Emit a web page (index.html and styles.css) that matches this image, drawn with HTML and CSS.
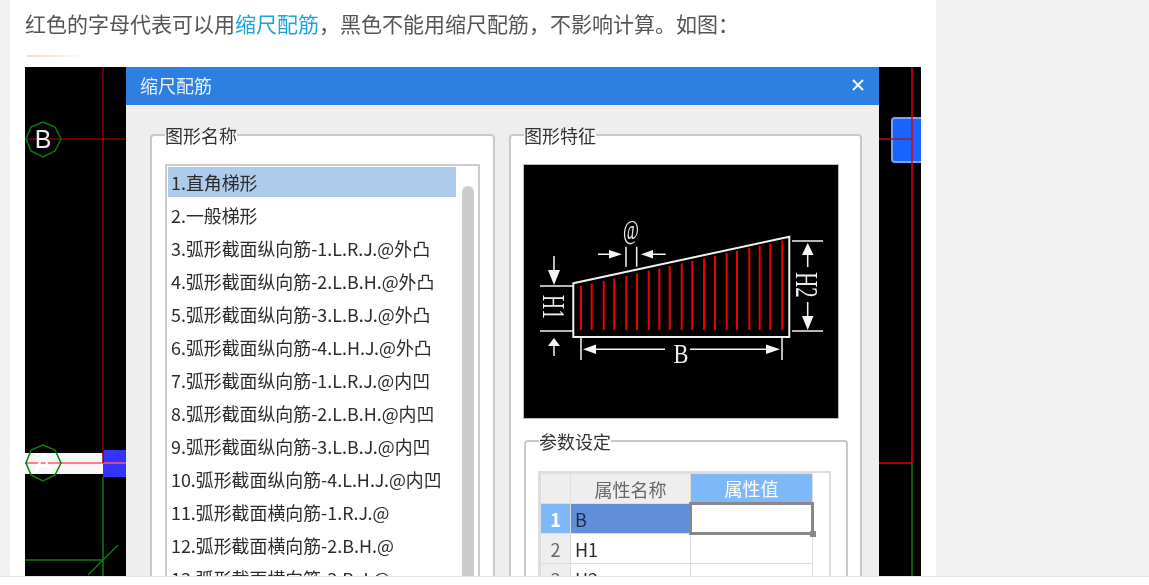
FILE: index.html
```html
<!DOCTYPE html>
<html lang="zh-CN">
<head>
  <meta charset="UTF-8">
  <title>缩尺配筋</title>
  <link rel="stylesheet" href="styles.css">
</head>
<body>

<div class="page">
  <div class="article">
    <p class="intro">红色的字母代表可以用<a href="#" class="link">缩尺配筋</a>，黑色不能用缩尺配筋，不影响计算。如图：</p>
    <div class="img-sliver"></div>

    <div class="shot">
      <!-- CAD drawing behind the dialog -->
      <svg class="cad" viewBox="25 67 896 509" width="896" height="509">
        <rect x="25" y="67" width="896" height="509" fill="#000"/>
        <rect x="25" y="453" width="78" height="21" fill="#f7f7f7"/>
        <rect x="103" y="450" width="23" height="27" fill="#3333ff"/>
        <path d="M103 67V452M25 139H126" stroke="#8a0000" stroke-width="1.5" fill="none"/>
        <path d="M25 463H126" stroke="#ff5a6a" stroke-width="1.5" fill="none"/>
        <path d="M103 452V463" stroke="#8a0000" stroke-width="1.5"/>
        <path d="M103 477V576M25 560H103M118 545L88 575" stroke="#0a7d0a" stroke-width="1.5" fill="none"/>
        <polygon class="axis" points="43,122 55,127 61,139 55,151 43,157 31,151 26,139 31,127"/>
        <polygon class="axis" points="43,445 55,450 61,463 55,475 43,481 31,475 26,463 31,450"/>
        <text class="axis-label" x="43" y="148">B</text>
        <text class="axis-label axis-label-faint" x="43" y="472">A</text>
        <rect x="892" y="118" width="32" height="44" rx="3" fill="#1964ff" stroke="#7aa6f5" stroke-width="2"/>
        <path d="M879 139H912" stroke="#a5122e" stroke-width="1.5"/>
        <path d="M912 67V463M879 463H912" stroke="#e00010" stroke-width="1.5" fill="none"/>
        <path d="M912 463V576" stroke="#0a7d0a" stroke-width="1.5"/>
        <circle cx="294" cy="66" r="4" fill="#f0404a"/>
      </svg>

      <div class="dialog">
        <div class="dialog-title">
          <span>缩尺配筋</span>
          <svg class="close" viewBox="0 0 12 12" width="12" height="12">
            <path d="M1 1L11 11M11 1L1 11" stroke="#fff" stroke-width="2"/>
          </svg>
        </div>

        <div class="dialog-body">
          <fieldset class="group group-names">
            <legend>图形名称</legend>
            <div class="listbox">
              <ul class="shape-list">
                <li class="active">1.直角梯形</li>
                <li>2.一般梯形</li>
                <li>3.弧形截面纵向筋-1.L.R.J.@外凸</li>
                <li>4.弧形截面纵向筋-2.L.B.H.@外凸</li>
                <li>5.弧形截面纵向筋-3.L.B.J.@外凸</li>
                <li>6.弧形截面纵向筋-4.L.H.J.@外凸</li>
                <li>7.弧形截面纵向筋-1.L.R.J.@内凹</li>
                <li>8.弧形截面纵向筋-2.L.B.H.@内凹</li>
                <li>9.弧形截面纵向筋-3.L.B.J.@内凹</li>
                <li>10.弧形截面纵向筋-4.L.H.J.@内凹</li>
                <li>11.弧形截面横向筋-1.R.J.@</li>
                <li>12.弧形截面横向筋-2.B.H.@</li>
                <li>13.弧形截面横向筋-3.B.J.@</li>
              </ul>
              <div class="scrollbar"></div>
            </div>
          </fieldset>

          <fieldset class="group group-shape">
            <legend>图形特征</legend>
            <svg class="preview" viewBox="523 164 316 255" width="316" height="255">
              <rect x="523" y="164" width="316" height="255" fill="#000"/>
              <path class="rebar" d="M581 286V330M591.7 283.6V330M603.7 280.9V330M614.3 278.5V330M626.3 275.8V330M637 273.4V330M648.7 270.7V330M659.3 268.4V330M669.7 266V330M681.7 263.3V330M692.3 260.9V330M704 258.3V330M715 255.8V330M726.7 253.2V330M737 250.8V330M749.3 248.1V330M759.7 245.7V330M770.3 243.3V330M782.3 240.6V330"/>
              <path class="outline" d="M573.3 283.3L789.3 236.7V337H573.3Z"/>
              <path class="dim" d="M540 286H573M540 331H573M554 256V273M554 345V356"/>
              <path class="dim" d="M792 241H823M792 331H823M807.7 254V267M807.7 302V317"/>
              <path class="dim" d="M598 254.3H611M652 254.3H665.7M626 246.7V266.7M636.7 246.7V266.7"/>
              <path class="dim" d="M581 338V360M782 338V360M594 349.3H665M690 349.3H768"/>
              <path class="head" d="M548 270H560L554 285ZM548 346H560L554 338ZM802 255H813.5L807.7 243ZM802 316H813.5L807.7 330ZM609 250L622 254.3L609 258.5ZM653 250L641 254.3L653 258.5ZM596 344.5L583 349.3L596 354ZM766 344.5L780 349.3L766 354Z"/>
              <text class="dim-text" transform="translate(631 239) scale(0.72 1.1)" font-size="24">@</text>
              <text class="dim-text" transform="translate(681 363) scale(0.8 1)" font-size="28">B</text>
              <text class="dim-text" transform="translate(543 307) rotate(90) scale(0.75 1.18)" font-size="26">H1</text>
              <text class="dim-text" transform="translate(796 285) rotate(90) scale(0.8 1.2)" font-size="26">H2</text>
            </svg>

            <fieldset class="group group-params">
              <legend>参数设定</legend>
              <div class="table-box">
                <table class="param-table">
                  <tr>
                    <th class="corner"></th>
                    <th>属性名称</th>
                    <th class="col-active">属性值</th>
                  </tr>
                  <tr>
                    <th class="row-active">1</th>
                    <td class="cell-selected">B</td>
                    <td class="cell-edit"></td>
                  </tr>
                  <tr>
                    <th>2</th>
                    <td>H1</td>
                    <td></td>
                  </tr>
                  <tr>
                    <th>3</th>
                    <td>H2</td>
                    <td></td>
                  </tr>
                </table>
              </div>
            </fieldset>
          </fieldset>
        </div>
      </div>
    </div>
  </div>
</div>
<div class="bottom-bar"></div>

</body>
</html>
```

FILE: styles.css
```css
html, body {
  margin: 0;
  height: 100%;
  overflow: hidden;
}
body {
  display: flex;
  flex-direction: column;
  background: #f1f1f1;
  font-family: "Noto Sans CJK SC", "Liberation Sans", sans-serif;
}
.page {
  flex: 1;
  min-height: 0;
  padding-left: 10px;
  filter: blur(0.5px);
}
.bottom-bar {
  height: 8px;
  background: #fff;
  border-top: 1px solid #e6e6e6;
}
.article {
  display: flex;
  flex-direction: column;
  box-sizing: border-box;
  width: 926px;
  height: 100%;
  padding: 8px 0 0 15px;
  background: white;
}
.intro {
  margin: 0;
  font-size: 21px;
  line-height: 30px;
  color: #555;
  white-space: nowrap;
}
.link {
  color: #1ea4dd;
  text-decoration: none;
}
.img-sliver {
  width: 58px;
  height: 2px;
  margin: 17px 0 10px 2px;
  background: linear-gradient(90deg, #f8dcb4, #fcefdc 60%, #fff);
}
.shot {
  position: relative;
  flex: 1;
  min-height: 0;
  width: 896px;
  overflow: hidden;
}
.cad {
  display: block;
}
.axis {
  fill: none;
  stroke: #0a7d0a;
  stroke-width: 1.5;
}
.axis-label {
  font-family: "Liberation Sans", sans-serif;
  font-size: 25px;
  fill: #eee;
  text-anchor: middle;
}
.axis-label-faint {
  fill: #fff;
}

/* dialog */
.dialog {
  position: absolute;
  top: 0;
  bottom: 0;
  left: 101px;
  width: 753px;
  background: #eee;
  overflow: hidden;
}
.dialog-title {
  display: flex;
  align-items: center;
  justify-content: space-between;
  box-sizing: border-box;
  height: 38px;
  padding: 0 15px 2px 14px;
  background: #2d7fe0;
  color: #e8f1fc;
  font-size: 18px;
}
.dialog-body {
  display: flex;
  align-items: flex-start;
  gap: 14px;
  padding: 18px 17px 0 24px;
}

/* group boxes */
.group {
  box-sizing: border-box;
  margin: 0;
  min-width: 0;
  border: 2px solid #c8c8c8;
  border-radius: 4px;
  background: white;
}
.group legend {
  padding: 0;
  font-size: 18px;
  line-height: 24px;
  color: #333;
}
.group-names {
  width: 345px;
  height: 560px;
  padding: 17px 13px 0 13px;
}
.group-shape {
  width: 353px;
  height: 560px;
  padding: 17px 0 0 12px;
}
.group-shape > legend {
  margin-left: 1px;
}
.group-params {
  width: 324px;
  height: 300px;
  margin: 10px 0 0 1px;
  padding: 18px 0 0 13px;
}
.group-params legend {
  margin-left: 0;
}

/* list of shapes */
.listbox {
  display: flex;
  box-sizing: border-box;
  width: 315px;
  height: 500px;
  padding: 1px;
  border: 2px solid #ccc;
}
.shape-list {
  width: 288px;
  margin: 0;
  padding: 0;
  list-style: none;
}
.shape-list li {
  height: 30px;
  margin-bottom: 3px;
  padding-left: 3px;
  font-size: 17.9px;
  line-height: 30px;
  color: #2b2b2b;
  white-space: nowrap;
}
.shape-list .active {
  background: #aecbec;
}
.scrollbar {
  width: 12px;
  height: 480px;
  margin: 19px 0 0 6px;
  border-radius: 6px;
  background: #ccc;
}

/* preview drawing */
.preview {
  display: block;
  outline: 1px solid #bbb;
  outline-offset: -1px;
}
.rebar {
  fill: none;
  stroke: #f00000;
  stroke-width: 2;
}
.outline {
  fill: none;
  stroke: #f2f2f2;
  stroke-width: 2;
}
.dim {
  fill: none;
  stroke: #f2f2f2;
  stroke-width: 1.5;
}
.head {
  fill: #f5f5f5;
}
.dim-text {
  font-family: "Liberation Serif", serif;
  fill: #eee;
  text-anchor: middle;
}

/* parameter table */
.table-box {
  box-sizing: border-box;
  width: 293px;
  height: 200px;
  margin-left: -1px;
  border: 2px solid #ddd;
}
.param-table {
  width: 274px;
  table-layout: fixed;
  border-collapse: collapse;
  font-size: 18px;
  line-height: 24px;
  color: #2b2b2b;
}
.param-table th,
.param-table td {
  box-sizing: border-box;
  height: 30px;
  padding: 0;
  border: 1px solid #ddd;
  font-weight: normal;
}
.param-table th {
  background: #eee;
  color: #666;
  text-align: center;
}
.param-table th:first-child {
  width: 30px;
}
.param-table th:nth-child(2) {
  width: 120px;
}
.param-table td {
  padding-left: 4px;
}
.param-table .col-active,
.param-table .row-active {
  background: #7fb8f8;
  color: white;
}
.param-table .row-active {
  font-weight: bold;
}
.param-table .cell-selected {
  background: #618ed8;
  color: #1d2a44;
}
.param-table .cell-edit {
  position: relative;
  border: 3px solid #888;
}
.cell-edit::after {
  content: "";
  position: absolute;
  right: -5px;
  bottom: -5px;
  width: 6px;
  height: 6px;
  background: #888;
}
```
